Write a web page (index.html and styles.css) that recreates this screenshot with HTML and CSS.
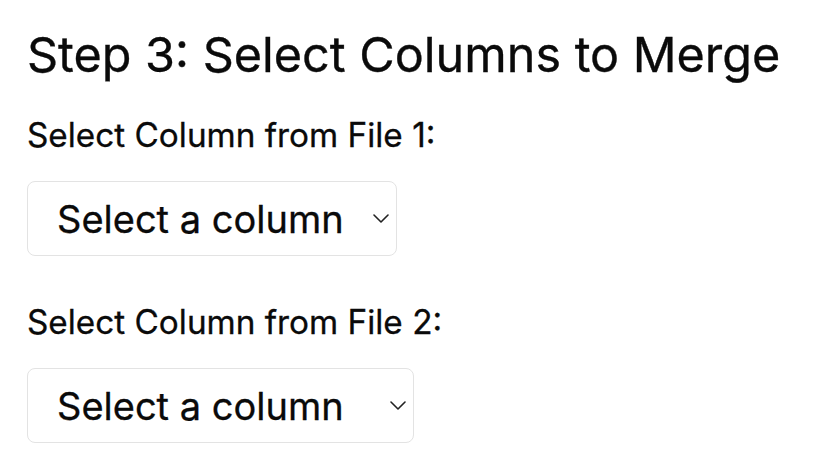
FILE: index.html
```html
<!DOCTYPE html>
<html>
<head>
<meta charset="utf-8">
<link rel="stylesheet" href="styles.css">
</head>
<body>
<div class="page">
  <h2 class="title">Step 3: Select Columns to Merge</h2>
  <div class="field">
    <label class="label" for="col1">Select Column from File 1:</label>
    <div class="select-wrap select-wrap--one">
      <select id="col1" class="select">
        <option>Select a column</option>
      </select>
      <svg class="chevron" viewBox="0 0 16 9" width="16" height="9"><path d="M1 1 L8 8 L15 1" fill="none" stroke="#222" stroke-width="1.6" stroke-linecap="round" stroke-linejoin="round"/></svg>
    </div>
  </div>
  <div class="field">
    <label class="label" for="col2">Select Column from File 2:</label>
    <div class="select-wrap select-wrap--two">
      <select id="col2" class="select">
        <option>Select a column</option>
      </select>
      <svg class="chevron" viewBox="0 0 16 9" width="16" height="9"><path d="M1 1 L8 8 L15 1" fill="none" stroke="#222" stroke-width="1.6" stroke-linecap="round" stroke-linejoin="round"/></svg>
    </div>
  </div>
</div>
</body>
</html>
```
FILE: styles.css
```css
html, body {
  margin: 0;
  padding: 0;
  background: #ffffff;
}
body {
  font-family: "Inter", "Liberation Sans", sans-serif;
  color: #0a0a0a;
}
.page {
  padding: 26px 0 0 27px;
}
.title {
  margin: 0 0 31px 0;
  font-size: 48.5px;
  line-height: 58px;
  font-weight: 400;
  -webkit-text-stroke: 0.35px #0a0a0a;
}
.field {
  margin-bottom: 46px;
}
.label {
  display: block;
  font-size: 33.3px;
  line-height: 40px;
  font-weight: 400;
  margin-bottom: 26px;
  -webkit-text-stroke: 0.3px #0a0a0a;
}
.select-wrap {
  position: relative;
  display: inline-block;
  vertical-align: top;
}
.select-wrap--one { width: 370px; }
.select-wrap--two { width: 387px; }
.select {
  appearance: none;
  -webkit-appearance: none;
  box-sizing: border-box;
  display: block;
  width: 100%;
  height: 75px;
  margin: 0;
  padding: 0 40px 0 29px;
  border: 1.5px solid #e3e3e3;
  border-radius: 8px;
  background: #ffffff;
  font-family: "Inter", "Liberation Sans", sans-serif;
  font-size: 38px;
  color: #0a0a0a;
  outline: none;
  -webkit-text-stroke: 0.3px #0a0a0a;
}
.chevron {
  position: absolute;
  right: 8px;
  top: 33px;
  pointer-events: none;
}
```
